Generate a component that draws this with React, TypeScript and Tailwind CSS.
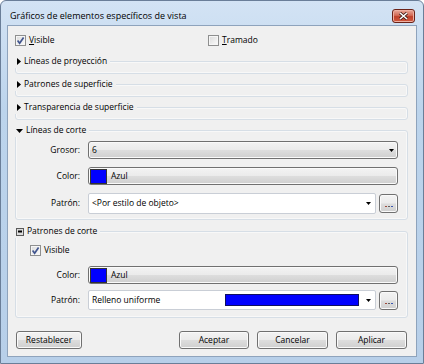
import React from 'react'

const btnGrad =
  'bg-[linear-gradient(to_bottom,#f3f3f3_0%,#ebebeb_48%,#dddddd_52%,#cfcfcf_100%)] border border-[#707070] rounded-[3px] shadow-[inset_0_0_0_1px_#fafafa]'

function Check({ checked }: { checked?: boolean }) {
  return (
    <span className="w-[11px] h-[11px] shrink-0 border border-[#8e8f8f] bg-[linear-gradient(135deg,#dadada,#fcfcfc)] shadow-[inset_0_0_0_1px_#f6f6f6] flex items-center justify-center">
      {checked && (
        <svg width="9" height="9" viewBox="0 0 9 9">
          <path d="M1.6 4.6 L3.6 7.2 L7.6 1.4" stroke="#42568f" strokeWidth="1.7" fill="none" />
        </svg>
      )}
    </span>
  )
}

function Arrow() {
  return (
    <svg width="5" height="3" viewBox="0 0 5 3" className="shrink-0">
      <path d="M0 0H5L2.5 3Z" fill="#000" />
    </svg>
  )
}

function RightTri() {
  return (
    <svg width="4" height="7" viewBox="0 0 4 7" className="shrink-0 ml-[2px]">
      <path d="M0 0L4 3.5L0 7Z" fill="#000" />
    </svg>
  )
}

function DownTri() {
  return (
    <svg width="7" height="4" viewBox="0 0 7 4" className="shrink-0 ml-[1px]">
      <path d="M0 0H7L3.5 4Z" fill="#000" />
    </svg>
  )
}

function BoxIcon() {
  return (
    <svg width="8" height="8" viewBox="0 0 8 8" className="shrink-0 ml-[1px]">
      <rect x="0.5" y="0.5" width="7" height="7" fill="#dcdcdc" stroke="#5a5a5a" />
      <rect x="2" y="2.5" width="4" height="2" fill="#000" />
    </svg>
  )
}

function Group({
  title,
  icon,
  gap,
  className,
  children,
}: {
  title: string
  icon: React.ReactNode
  gap: string
  className: string
  children?: React.ReactNode
}) {
  return (
    <div className={`relative shrink-0 border border-[#d6dee6] rounded-[3px] shadow-[inset_0_0_0_1px_#f8f8f8] ${className}`}>
      <div className={`absolute left-[-1px] top-[-7px] h-[13px] flex items-center bg-[#f0f0f0] pr-[3px] ${gap}`}>
        {icon}
        <span>{title}</span>
      </div>
      {children}
    </div>
  )
}

function Label({ children }: { children: React.ReactNode }) {
  return <span className="w-[64px] text-right shrink-0">{children}</span>
}

function DotsButton() {
  return (
    <div className={`w-[19px] h-[19px] shrink-0 flex items-end justify-center pb-[5px] gap-[1px] ${btnGrad}`}>
      <span className="w-[2px] h-[1px] bg-[#a04a3a]" />
      <span className="w-[2px] h-[1px] bg-[#606060]" />
      <span className="w-[2px] h-[1px] bg-[#3a56b0]" />
    </div>
  )
}

function ColorButton() {
  return (
    <div className={`flex-1 h-[18px] flex items-center pl-[1px] gap-[4px] ${btnGrad}`}>
      <span className="w-[17px] h-[15px] bg-[#0000ff] border border-[#333]" />
      <span>Azul</span>
    </div>
  )
}

function Button({ w, children }: { w: string; children: React.ReactNode }) {
  return (
    <div className={`h-[18px] flex items-center justify-center ${w} ${btnGrad}`}>{children}</div>
  )
}

export default function App() {
  return (
    <div className="w-[424px] h-[364px] flex flex-col bg-[linear-gradient(to_bottom,#d3e3f4,#bcd4ec_30%,#b7cfe9)] border border-[#6a7e98] rounded-t-[6px] font-['Open_Sans',sans-serif] text-[8.5px] text-black leading-none">
      {/* title bar */}
      <div className="h-[24px] shrink-0 flex items-start pl-[9px] pr-[8px]">
        <span className="flex-1 text-[9px] mt-[10px]">Gráficos de elementos específicos de vista</span>
        <div className="mt-[8px] w-[23px] h-[14px] rounded-[3px] border border-[#6b2318] bg-[linear-gradient(to_bottom,#e9a99b,#d36a55_45%,#c0402a_55%,#d15a40)] flex items-center justify-center shadow-[inset_0_0_0_1px_#eeb0a2]">
          <svg width="9" height="8" viewBox="0 0 9 8">
            <path d="M1 1L8 7M8 1L1 7" stroke="#3b1a14" strokeWidth="3" />
            <path d="M1 1L8 7M8 1L1 7" stroke="#fff" strokeWidth="1.6" />
          </svg>
        </div>
      </div>

      {/* client area */}
      <div className="mx-[6px] mb-[6px] flex-1 bg-[#f0f0f0] border border-[#8ea3bc] flex flex-col pl-[7px] pr-[8px] pt-[7px]">
        <div className="h-[14px] flex items-center shrink-0">
          <div className="w-[193px] flex items-center gap-[3px]">
            <Check checked />
            <span>
              <span className="underline">V</span>isible
            </span>
          </div>
          <div className="flex items-center gap-[3px]">
            <Check />
            <span>
              <span className="underline">T</span>ramado
            </span>
          </div>
        </div>

        <Group title="Líneas de proyección" icon={<RightTri />} gap="gap-[3px]" className="mt-[14px] h-[13px]" />
        <Group title="Patrones de superficie" icon={<RightTri />} gap="gap-[3px]" className="mt-[10px] h-[13px]" />
        <Group title="Transparencia de superficie" icon={<RightTri />} gap="gap-[3px]" className="mt-[10px] h-[13px]" />

        <Group title="Líneas de corte" icon={<DownTri />} gap="gap-[3px]" className="mt-[10px] pt-[10px] pb-[5px] pr-[9px] flex flex-col">
          <div className="flex items-center gap-[8px] h-[18px]">
            <Label>Grosor:</Label>
            <div className={`flex-1 h-[18px] flex items-center pl-[3px] pr-[3px] ${btnGrad}`}>
              <span className="flex-1">6</span>
              <Arrow />
            </div>
          </div>
          <div className="flex items-center gap-[8px] mt-[8px]">
            <Label>Color:</Label>
            <ColorButton />
          </div>
          <div className="flex items-center gap-[8px] mt-[8px]">
            <Label>Patrón:</Label>
            <div className="flex-1 flex items-center gap-[3px]">
              <div className="flex-1 h-[21px] bg-white border border-[#c9ced6] rounded-[2px] flex items-center pl-[3px] pr-[4px]">
                <span className="flex-1">&lt;Por estilo de objeto&gt;</span>
                <Arrow />
              </div>
              <DotsButton />
            </div>
          </div>
        </Group>

        <Group title="Patrones de corte" icon={<BoxIcon />} gap="gap-[3px]" className="mt-[11px] pt-[11px] pb-[7px] pr-[9px] flex flex-col">
          <div className="h-[14px] flex items-center gap-[3px] pl-[14px]">
            <Check checked />
            <span>Visible</span>
          </div>
          <div className="flex items-center gap-[8px] mt-[9px]">
            <Label>Color:</Label>
            <ColorButton />
          </div>
          <div className="flex items-center gap-[8px] mt-[6px]">
            <Label>Patrón:</Label>
            <div className="flex-1 flex items-center gap-[3px]">
              <div className="flex-1 h-[20px] bg-white border border-[#c9ced6] rounded-[2px] flex items-center pl-[3px] pr-[4px]">
                <span className="w-[133px] shrink-0">Relleno uniforme</span>
                <span className="w-[134px] h-[12px] bg-[#0000ff] border border-[#101060]" />
                <span className="flex-1" />
                <Arrow />
              </div>
              <DotsButton />
            </div>
          </div>
        </Group>

        <div className="mt-[13px] flex items-center justify-between px-[1px]">
          <Button w="w-[66px]">Restablecer</Button>
          <div className="flex gap-[8px]">
            <Button w="w-[70px]">Aceptar</Button>
            <Button w="w-[71px]">Cancelar</Button>
            <Button w="w-[71px]">Aplicar</Button>
          </div>
        </div>
      </div>
    </div>
  )
}
